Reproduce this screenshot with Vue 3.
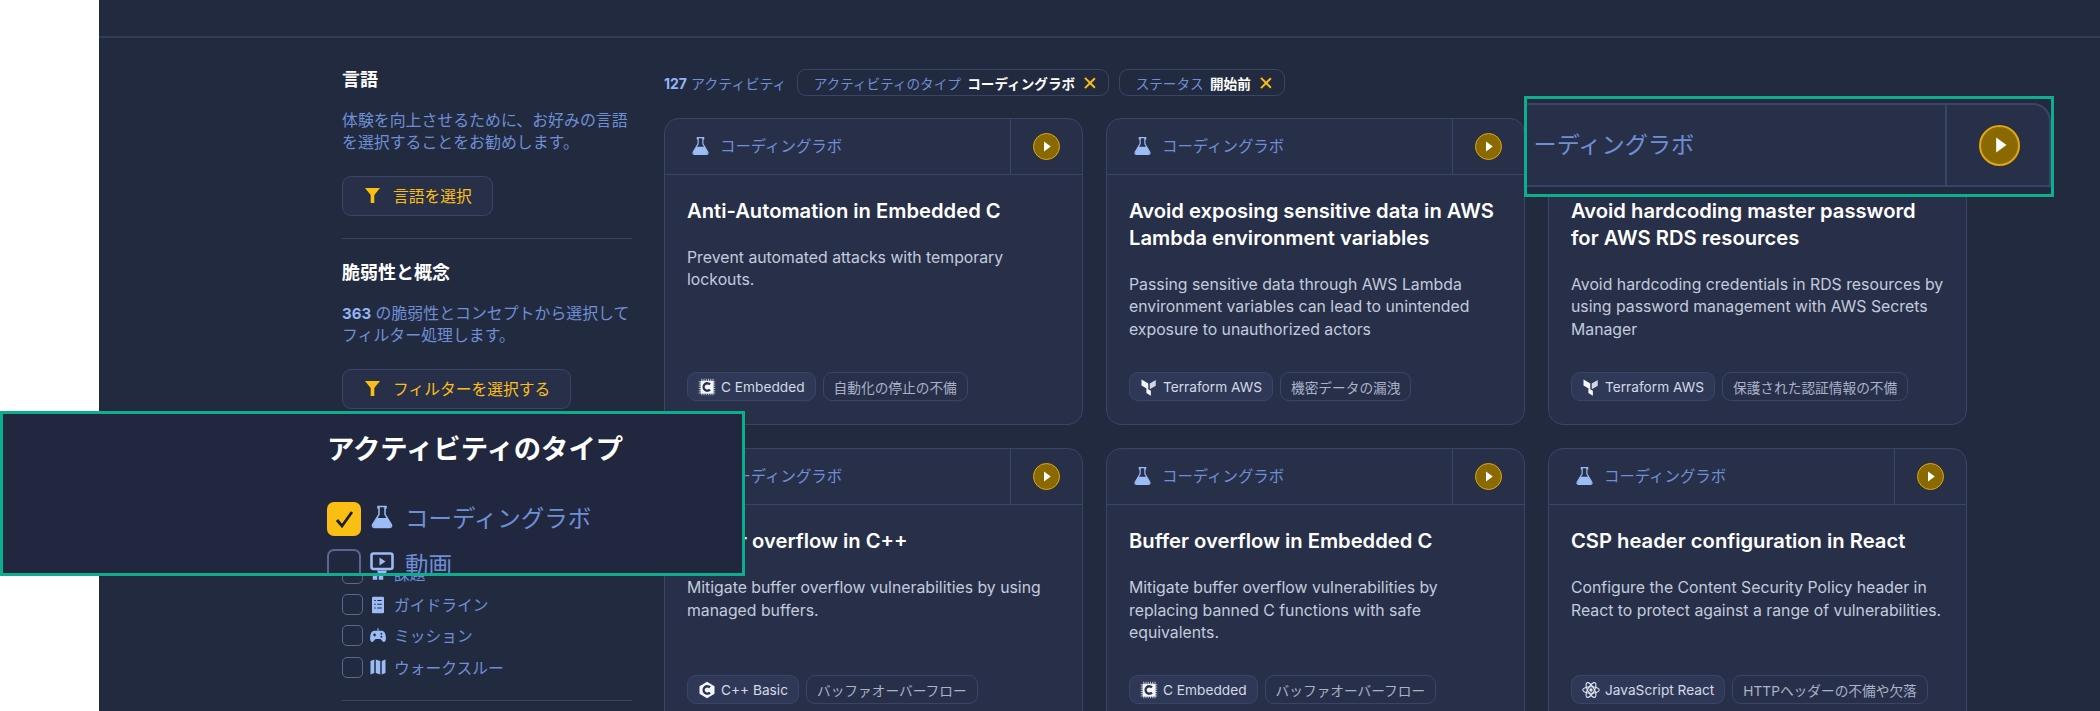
<script setup>
const types = [
  { label: 'コーディングラボ', icon: 'flask', checked: true },
  { label: '動画', icon: 'video' },
  { label: '課題', icon: 'task' },
  { label: 'ガイドライン', icon: 'guide' },
  { label: 'ミッション', icon: 'game' },
  { label: 'ウォークスルー', icon: 'map' }
]

const cards = [
  {
    title: 'Anti-Automation in Embedded C',
    desc: 'Prevent automated attacks with temporary\nlockouts.',
    tech: 'C Embedded', techIcon: 'chip', topic: '自動化の停止の不備'
  },
  {
    title: 'Avoid exposing sensitive data in AWS\nLambda environment variables',
    desc: 'Passing sensitive data through AWS Lambda\nenvironment variables can lead to unintended\nexposure to unauthorized actors',
    tech: 'Terraform AWS', techIcon: 'terraform', topic: '機密データの漏洩'
  },
  {
    title: 'Avoid hardcoding master password\nfor AWS RDS resources',
    desc: 'Avoid hardcoding credentials in RDS resources by\nusing password management with AWS Secrets\nManager',
    tech: 'Terraform AWS', techIcon: 'terraform', topic: '保護された認証情報の不備'
  },
  {
    title: 'Buffer overflow in C++',
    desc: 'Mitigate buffer overflow vulnerabilities by using\nmanaged buffers.',
    tech: 'C++ Basic', techIcon: 'cpp', topic: 'バッファオーバーフロー'
  },
  {
    title: 'Buffer overflow in Embedded C',
    desc: 'Mitigate buffer overflow vulnerabilities by\nreplacing banned C functions with safe\nequivalents.',
    tech: 'C Embedded', techIcon: 'chip', topic: 'バッファオーバーフロー'
  },
  {
    title: 'CSP header configuration in React',
    desc: 'Configure the Content Security Policy header in\nReact to protect against a range of vulnerabilities.',
    tech: 'JavaScript React', techIcon: 'react', topic: 'HTTPヘッダーの不備や欠落'
  }
]
</script>

<template>
  <div class="page">
    <svg class="defs" aria-hidden="true">
      <symbol id="flask" viewBox="0 0 24 24">
        <path d="M8 1.500h8v1.600h-1v6.200l6.200 10.200c.9 1.500-.1 3-1.800 3H4.600c-1.700 0-2.700-1.500-1.800-3L9 9.300V3.100H8z" fill="none" stroke="currentColor" stroke-width="1.500"/>
        <path d="M6.800 13h10.400l3.600 6.500c.6 1.200-.1 2.500-1.500 2.500H4.700c-1.400 0-2.100-1.300-1.500-2.500z" fill="currentColor"/>
      </symbol>
      <symbol id="video" viewBox="0 0 24 24">
        <rect x="1.500" y="1.500" width="21" height="15.500" rx="2" fill="none" stroke="currentColor" stroke-width="2.600"/>
        <path d="M9.500 5.500v8l6-4z" fill="currentColor"/>
        <path d="M7 18.500h10l-1.500 4h-7z" fill="currentColor"/>
      </symbol>
      <symbol id="task" viewBox="0 0 24 24">
        <path d="M5 3h14v6H5zM5 12h6v9H5zM13 12h6v9h-6z" fill="currentColor"/>
      </symbol>
      <symbol id="guide" viewBox="0 0 24 24">
        <rect x="4" y="1" width="16" height="22" rx="1.500" fill="currentColor"/>
        <path d="M7 6h2M11 6h6M7 11h2M11 11h6M7 16h2M11 16h6" stroke="#222a40" stroke-width="1.500"/>
      </symbol>
      <symbol id="game" viewBox="0 0 24 24">
        <path d="M7 5h10c3 0 5 3 5.500 8 .4 4-.6 7-2.500 7-2 0-3-3-5-4H9c-2 1-3 4-5 4-1.900 0-2.900-3-2.500-7C2 8 4 5 7 5z" fill="currentColor"/>
        <path d="M12 5V1.500" stroke="currentColor" stroke-width="1.500"/>
        <path d="M5.500 10.500h4M7.500 8.500v4" stroke="#222a40" stroke-width="1.500"/>
        <circle cx="16.500" cy="9" r="1.200" fill="#222a40"/>
        <circle cx="16.500" cy="13" r="1.200" fill="#222a40"/>
      </symbol>
      <symbol id="map" viewBox="0 0 24 24">
        <path d="M2 4l5-2v18l-5 2zM9 2l6 2v18l-6-2zM17 4l5-2v18l-5 2z" fill="currentColor"/>
      </symbol>
      <symbol id="funnel" viewBox="0 0 15 15">
        <path d="M0 0h15L9.300 7v8H5.700V7z" fill="currentColor"/>
      </symbol>
      <symbol id="chip" viewBox="0 0 24 24">
        <path d="M5 1v22M8 1v22M11 1v22M14 1v22M17 1v22M20 1v22M1 5h22M1 8h22M1 11h22M1 14h22M1 17h22M1 20h22" stroke="#e8ecf5" stroke-width="1"/>
        <rect x="3.500" y="3.500" width="17" height="17" rx="2" fill="#f4f6fb"/>
        <path d="M16 8.500a5 5 0 1 0 0 7" fill="none" stroke="#283049" stroke-width="3"/>
      </symbol>
      <symbol id="terraform" viewBox="0 0 24 24">
        <path d="M2 2l9 5.200v8L2 10z" fill="#f4f6fb"/>
        <path d="M13 7.200l8-4.700v7.800l-8 4.700z" fill="#cfd6e6"/>
        <path d="M8.500 13.500l6 3.500v6.500l-6-3.500z" fill="#f4f6fb"/>
      </symbol>
      <symbol id="cpp" viewBox="0 0 24 24">
        <path d="M12 1l10 6v10l-10 6L2 17V7z" fill="#f4f6fb"/>
        <path d="M16 8.500a5 5 0 1 0 0 7" fill="none" stroke="#283049" stroke-width="3"/>
      </symbol>
      <symbol id="react" viewBox="0 0 24 24">
        <g fill="none" stroke="#dfe5f2" stroke-width="1.500">
          <ellipse cx="12" cy="12" rx="11" ry="4.300"/>
          <ellipse cx="12" cy="12" rx="11" ry="4.300" transform="rotate(60 12 12)"/>
          <ellipse cx="12" cy="12" rx="11" ry="4.300" transform="rotate(120 12 12)"/>
        </g>
        <circle cx="12" cy="12" r="2.200" fill="#dfe5f2"/>
      </symbol>
      <symbol id="play" viewBox="0 0 24 24">
        <path d="M8.500 5v14l9.500-7z" fill="#fff"/>
      </symbol>
    </svg>

    <div class="rail"></div>

    <main class="main">
      <div class="topbar"></div>

      <div class="content">
        <aside class="sidebar">
          <section class="side-section">
            <h3>言語</h3>
            <p>体験を向上させるために、お好みの言語<br>を選択することをお勧めします。</p>
            <button class="filter-btn">
              <svg class="funnel"><use href="#funnel" /></svg>
              言語を選択
            </button>
          </section>
          <section class="side-section">
            <h3>脆弱性と概念</h3>
            <p><b>363</b> の脆弱性とコンセプトから選択して<br>フィルター処理します。</p>
            <button class="filter-btn">
              <svg class="funnel"><use href="#funnel" /></svg>
              フィルターを選択する
            </button>
          </section>
          <section class="side-section">
            <h3>アクティビティのタイプ</h3>
            <ul class="type-list">
              <li v-for="t in types" :key="t.label">
                <span class="check"></span>
                <svg class="type-icon"><use :href="'#' + t.icon" /></svg>
                {{ t.label }}
              </li>
            </ul>
          </section>
        </aside>

        <div class="results">
          <div class="filters">
            <span class="count"><b>127</b> アクティビティ</span>
            <span class="pill">アクティビティのタイプ <b>コーディングラボ</b><i class="x"></i></span>
            <span class="pill">ステータス <b>開始前</b><i class="x"></i></span>
          </div>

          <div class="grid">
            <article v-for="c in cards" :key="c.title" class="card">
              <header class="card-head">
                <div class="card-type">
                  <svg class="flask"><use href="#flask" /></svg>
                  <span>コーディングラボ</span>
                </div>
                <div class="card-play">
                  <span class="play"><svg><use href="#play" /></svg></span>
                </div>
              </header>
              <div class="card-body">
                <h2>{{ c.title }}</h2>
                <p>{{ c.desc }}</p>
                <div class="tags">
                  <span class="tag tech"><svg><use :href="'#' + c.techIcon" /></svg>{{ c.tech }}</span>
                  <span class="tag">{{ c.topic }}</span>
                </div>
              </div>
            </article>
          </div>
        </div>
      </div>
    </main>

    <!-- magnified callouts laid over the page -->
    <div class="callout callout-types">
      <h3>アクティビティのタイプ</h3>
      <div class="big-row">
        <span class="big-check on">
          <svg viewBox="0 0 24 24"><path d="M5 13l5 6L20 5" fill="none" stroke="#1a2033" stroke-width="2.800"/></svg>
        </span>
        <svg class="big-icon"><use href="#flask" /></svg>
        <span class="big-label">コーディングラボ</span>
      </div>
      <div class="big-row">
        <span class="big-check"></span>
        <svg class="big-icon"><use href="#video" /></svg>
        <span class="big-label">動画</span>
      </div>
    </div>

    <div class="callout callout-head">
      <div class="big-head">
        <div class="big-type">ーディングラボ</div>
        <div class="big-play">
          <span class="play big"><svg><use href="#play" /></svg></span>
        </div>
      </div>
    </div>
  </div>
</template>

<style>
html, body {
  margin: 0;
  background: #fff;
}
</style>

<style scoped>
.page {
  position: relative;
  display: flex;
  width: 2100px;
  height: 711px;
  overflow: hidden;
  background: #fff;
  font-family: Inter, "Noto Sans CJK JP", sans-serif;
}

.defs {
  position: absolute;
  width: 0;
  height: 0;
}

.rail {
  width: 99px;
  flex-shrink: 0;
}

.main {
  flex: 1;
  background: #222a40;
}

.topbar {
  height: 36px;
  border-bottom: 2px solid #323b5a;
}

.content {
  display: flex;
  gap: 32px;
  padding: 31px 0 0 243px;
}

/* Sidebar */
.sidebar {
  width: 290px;
  flex-shrink: 0;
  margin-top: -1px;
}

.side-section {
  padding-bottom: 22px;
  margin-bottom: 22px;
  border-bottom: 1px solid #3a4466;
}

.side-section h3 {
  margin: 0 0 18px;
  font-size: 18px;
  line-height: 24px;
  font-weight: 700;
  color: #fff;
}

.side-section p {
  margin: 0 0 21px;
  font-size: 15.900px;
  line-height: 22.4px;
  color: #6e8fd6;
  white-space: nowrap;
}

.side-section p b {
  color: #93b4f5;
  font-size: 15px;
  font-weight: 700;
}

.filter-btn {
  display: flex;
  align-items: center;
  gap: 13px;
  height: 40px;
  padding: 0 20px 0 22px;
  background: #283049;
  border: 1px solid #3a4466;
  border-radius: 9px;
  color: #fbbf14;
  font-family: inherit;
  font-size: 15.75px;
}

.funnel {
  width: 15px;
  height: 15px;
}

.type-list {
  list-style: none;
  margin: 22px 0 0;
  padding: 0;
  display: flex;
  flex-direction: column;
  gap: 9.300px;
}

.type-list li {
  display: flex;
  align-items: center;
  height: 22px;
  font-size: 15.75px;
  color: #6e8fd6;
}

.check {
  width: 19px;
  height: 19px;
  border: 1.500px solid #5a6790;
  border-radius: 5px;
  margin-right: 5.500px;
}

.type-icon {
  width: 18px;
  height: 18px;
  margin-right: 7.500px;
  color: #9bbcf5;
}

/* Results */
.results {
  width: 1303px;
  flex-shrink: 0;
}

.filters {
  display: flex;
  align-items: center;
  height: 27px;
  margin-bottom: 22px;
}

.count {
  font-size: 14px;
  color: #6e8fd6;
  margin-right: 10.500px;
  white-space: nowrap;
}

.count b {
  color: #93b4f5;
}

.pill {
  display: flex;
  align-items: center;
  gap: 6.400px;
  height: 27px;
  box-sizing: border-box;
  padding: 0 12px 0 15.600px;
  margin-right: 10px;
  border: 1px solid #3a4466;
  border-radius: 9px;
  font-size: 13.600px;
  color: #6e8fd6;
  white-space: nowrap;
}

.pill b {
  color: #fff;
  font-weight: 700;
}

.x {
  position: relative;
  width: 12px;
  height: 12px;
  margin-left: 2.600px;
}

.x::before,
.x::after {
  content: "";
  position: absolute;
  left: 5px;
  top: -1px;
  width: 1.500px;
  height: 14px;
  background: #fbbf14;
  transform: rotate(45deg);
}

.x::after {
  transform: rotate(-45deg);
}

.grid {
  display: grid;
  grid-template-columns: repeat(3, 419px);
  gap: 23px;
}

.card {
  display: flex;
  flex-direction: column;
  box-sizing: border-box;
  background: #283049;
  border: 1px solid #3a4466;
  border-radius: 15px;
}

.card-head {
  display: flex;
  height: 55px;
  flex-shrink: 0;
  border-bottom: 1.500px solid #3a4466;
}

.card-type {
  flex: 1;
  display: flex;
  align-items: center;
  gap: 10px;
  padding-left: 26px;
  font-size: 15.400px;
  color: #6e8fd6;
}

.card-type span {
  margin-bottom: 4px;
}

.flask {
  width: 19px;
  height: 20px;
  color: #9bbcf5;
  margin-bottom: 2px;
}

.card-play {
  display: flex;
  align-items: center;
  justify-content: center;
  width: 71px;
  border-left: 1px solid #3a4466;
}

.play {
  display: flex;
  align-items: center;
  justify-content: center;
  box-sizing: border-box;
  width: 27px;
  height: 27px;
  background: #8a6a00;
  border: 1.500px solid #e0a80c;
  border-radius: 50%;
}

.play svg {
  width: 17px;
  height: 17px;
}

.card-body {
  flex: 1;
  display: flex;
  flex-direction: column;
  padding: 21.500px 22px 23px;
}

.card-body h2 {
  margin: 0 0 23.500px;
  font-size: 20.200px;
  line-height: 27px;
  font-weight: 600;
  color: #fff;
  white-space: pre-line;
}

.card-body p {
  margin: 0 0 31px;
  font-size: 15.800px;
  line-height: 22.4px;
  color: #c3cbdc;
  white-space: pre-line;
}

.tags {
  display: flex;
  gap: 7px;
  margin-top: auto;
}

.tag {
  display: flex;
  align-items: center;
  gap: 5px;
  height: 29px;
  box-sizing: border-box;
  padding: 0 10px;
  border: 1px solid #3a4466;
  border-radius: 9px;
  font-size: 13.700px;
  color: #a9b2c8;
  white-space: nowrap;
}

.tech {
  background: #2f3957;
  color: #d3d9e6;
}

.tech svg {
  width: 18px;
  height: 18px;
}

/* Callouts */
.callout {
  position: absolute;
  box-sizing: border-box;
  border: 3.500px solid #0cae8e;
  overflow: hidden;
}

.callout-types {
  left: 0;
  top: 411px;
  width: 745px;
  height: 165px;
  padding: 18px 0 0 324px;
  background: #20273e;
}

.callout-types h3 {
  margin: 0 0 34px;
  font-size: 27.350px;
  line-height: 36px;
  font-weight: 700;
  color: #fff;
  white-space: nowrap;
}

.big-row {
  display: flex;
  align-items: center;
  height: 34px;
  margin-bottom: 13px;
  font-size: 23.500px;
  color: #6e8fd6;
}

.big-label {
  margin-bottom: 5px;
}

.big-check {
  display: flex;
  box-sizing: border-box;
  width: 34px;
  height: 34px;
  border: 2px solid #5a6790;
  border-radius: 7px;
  margin-right: 9px;
}

.big-check.on {
  background: #fbbf14;
  border-color: #fbbf14;
  padding: 3px;
}

.big-icon {
  width: 24px;
  height: 24px;
  margin-right: 11px;
  margin-bottom: 4px;
  color: #9bbcf5;
}

.callout-head {
  left: 1524px;
  top: 96px;
  width: 530px;
  height: 101px;
  padding-top: 4px;
  background: #222a40;
}

.big-head {
  display: flex;
  height: 84px;
  background: #283049;
  border-top: 2px solid #3a4466;
  border-right: 2px solid #3a4466;
  border-bottom: 2px solid #3a4466;
  border-top-right-radius: 18px;
  box-sizing: border-box;
}

.big-type {
  flex: 1;
  display: flex;
  align-items: center;
  padding: 0 0 4px 6.500px;
  font-size: 23.200px;
  color: #6e8fd6;
  white-space: nowrap;
}

.big-play {
  display: flex;
  align-items: center;
  justify-content: center;
  box-sizing: border-box;
  width: 104px;
  padding-left: 3px;
  border-left: 2px solid #3a4466;
}

.play.big {
  width: 41px;
  height: 41px;
  border-width: 2px;
}

.play.big svg {
  width: 26px;
  height: 26px;
}
</style>
